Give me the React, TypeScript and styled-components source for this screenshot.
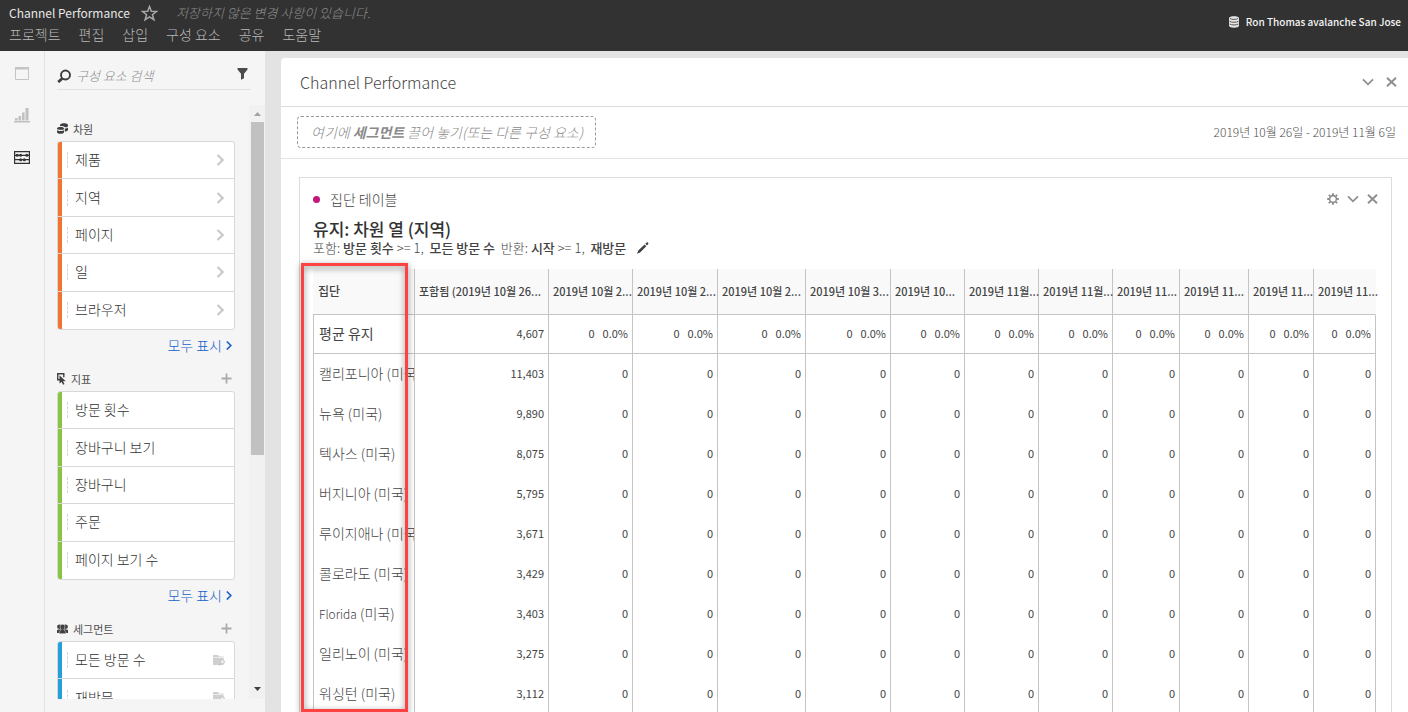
import React from "react";
import styled, { createGlobalStyle } from "styled-components";

const GlobalStyle = createGlobalStyle`
  *, *::before, *::after { box-sizing: border-box; }
  body {
    margin: 0;
    background: #e3e3e3;
    color: #444444;
    font-family: "Noto Sans CJK KR", "Noto Sans", sans-serif;
    font-size: 14px;
    line-height: 20px;
  }
  h1, h2, h3, p, ul { margin: 0; padding: 0; font-weight: 400; }
  ul { list-style: none; }
  button, input { font: inherit; color: inherit; background: none; border: 0; padding: 0; margin: 0; }
  button { cursor: pointer; }
  svg { display: block; }
`;

const Shell = styled.div`
  display: flex;
  flex-direction: column;
  height: 100vh;
  overflow: hidden;
`;

/* ---------- top bar ---------- */
const TopBar = styled.header`
  display: flex;
  justify-content: space-between;
  flex: none;
  height: 51px;
  padding: 3px 7px 0 9px;
  background: #323232;
  color: #b8b8b8;
`;
const TitleRow = styled.div`
  display: flex;
  align-items: center;
  height: 20px;
`;
const ProjectName = styled.h1`
  font-size: 12px;
  line-height: 20px;
  color: #e6e6e6;
`;
const StarButton = styled.button`
  margin: 0 18px 0 11px;
`;
const Unsaved = styled.p`
  font-size: 13px;
  font-style: italic;
  font-weight: 300;
  line-height: 18px;
  color: #8c8c8c;
`;
const MenuBar = styled.nav`
  display: flex;
  gap: 18px;
  margin-top: 1px;
`;
const MenuButton = styled.button`
  font-weight: 300;
  line-height: 20px;
`;
const Org = styled.div`
  display: flex;
  align-items: center;
  gap: 7px;
  height: 38px;
  font-size: 10px;
  font-weight: 500;
  color: #f4f4f4;
`;

/* ---------- shell ---------- */
const Body = styled.div`
  display: flex;
  flex: 1;
  min-height: 0;
`;
const Rail = styled.nav`
  display: flex;
  flex-direction: column;
  align-items: center;
  flex: none;
  width: 45px;
  padding-top: 12px;
  gap: 22px;
  border-right: 1px solid #e1e1e1;
  background: #f5f5f5;
`;
const RailButton = styled.button`
  display: grid;
  place-items: center;
  width: 24px;
  height: 20px;
`;
const SideBar = styled.aside`
  display: flex;
  flex-direction: column;
  flex: none;
  width: 220px;
  padding-bottom: 13px;
  background: #f5f5f5;
`;
const SearchRow = styled.div`
  display: flex;
  align-items: center;
  flex: none;
  height: 27px;
  margin: 12px 14px 15px 12px;
  border-bottom: 1px solid #e1e1e1;
`;
const SearchInput = styled.input`
  flex: 1;
  min-width: 0;
  margin-left: 5px;
  font-size: 13px;
  font-weight: 300;
  outline: 0;
  &::placeholder { color: #8e8e8e; font-style: italic; opacity: 1; }
`;
const FilterButton = styled.button`
  margin: 0 3px 5px 0;
`;
const ScrollArea = styled.div`
  display: flex;
  flex: 1;
  min-height: 0;
`;
const Sections = styled.div`
  flex: 1;
  min-width: 0;
  padding: 13px 14px 0 12px;
  overflow: hidden;
`;
const ScrollTrack = styled.div`
  display: flex;
  flex-direction: column;
  align-items: center;
  justify-content: space-between;
  width: 16px;
  padding: 7px 0 8px;
  background: #f1f1f1;
`;
const ScrollBody = styled.div`
  flex: 1;
  align-self: stretch;
  margin: 6px 1px 0 2px;
`;
const ScrollThumb = styled.div`
  height: 59%;
  background: #c1c1c1;
`;

const Section = styled.section`
  height: 250px;
`;
const SectionHead = styled.div`
  display: flex;
  align-items: center;
  gap: 5px;
  height: 23px;
  padding-bottom: 2px;
`;
const SectionTitle = styled.h2`
  flex: 1;
  font-size: 11px;
  line-height: 16px;
  color: #505050;
`;
const AddButton = styled.button`
  margin-right: 3px;
`;
const List = styled.ul<{ $rows: number }>`
  display: flex;
  flex-direction: column;
  height: ${(p) => (p.$rows === 5 ? "189px" : "auto")};
  border: 1px solid #d8d8d8;
  border-radius: 3px;
  background: #ffffff;
  overflow: hidden;
`;
const Item = styled.li<{ $accent: string }>`
  display: flex;
  align-items: center;
  flex: 1 0 37px;
  min-height: 37px;
  padding-right: 9px;
  color: #323232;
  background: linear-gradient(to right, ${(p) => p.$accent} 4px, transparent 4px);
  &:not(:last-child) { border-bottom: 1px solid #d8d8d8; }
`;
const Grip = styled.span`
  height: 16px;
  margin: 0 7px 0 9px;
  border-left: 1px dashed #d4d4d4;
`;
const ItemName = styled.span`
  flex: 1;
  padding-bottom: 2px;
  font-weight: 300;
  white-space: nowrap;
`;
const ShowAll = styled.a`
  display: flex;
  align-items: center;
  justify-content: flex-end;
  gap: 4px;
  margin: 5px 3px 0 0;
  font-size: 14px;
  font-weight: 300;
  color: #2062c8;
  text-decoration: none;
`;

/* ---------- workspace ---------- */
const Main = styled.main`
  position: relative;
  display: flex;
  flex: 1;
  min-width: 0;
  padding: 7px 0 0 16px;
  overflow: hidden;
`;
const Panel = styled.section`
  flex: 1;
  min-width: 0;
  border-top-left-radius: 4px;
  background: #ffffff;
`;
const PanelHead = styled.div`
  display: flex;
  align-items: center;
  justify-content: space-between;
  height: 49px;
  padding: 0 11px 0 19px;
  border-bottom: 1px solid #dcdcdc;
`;
const PanelTitle = styled.h2`
  font-size: 16px;
  font-weight: 300;
  line-height: 24px;
`;
const Tools = styled.div<{ $gap: number }>`
  display: flex;
  align-items: center;
  gap: ${(p) => p.$gap}px;
`;
const FilterRow = styled.div`
  display: flex;
  align-items: center;
  justify-content: space-between;
  height: 52px;
  padding: 0 12px 2px 16px;
  border-bottom: 1px solid #e4e4e4;
`;
const DropZone = styled.div`
  width: 299px;
  height: 32px;
  padding: 0 13px;
  border: 1px dashed #999999;
  border-radius: 4px;
  font-size: 14px;
  font-style: italic;
  font-weight: 300;
  line-height: 30px;
  color: #8a8a8a;
  white-space: nowrap;
  b { font-weight: 700; }
`;
const DateRange = styled.button`
  font-size: 12px;
  font-weight: 300;
  color: #505050;
`;
const Card = styled.section`
  margin: 18px 16px 0 18px;
  padding: 10px 15px 0 13px;
  border: 1px solid #dcdcdc;
  border-bottom: 0;
`;
const CardHead = styled.div`
  display: flex;
  align-items: center;
  height: 22px;
  margin-right: -2px;
`;
const Dot = styled.span`
  width: 7px;
  height: 7px;
  margin-right: 10px;
  border-radius: 50%;
  background: #c4177c;
`;
const CardTitle = styled.h3`
  flex: 1;
  font-size: 14px;
  font-weight: 300;
`;
const CohortTitle = styled.p`
  margin-top: 8px;
  font-size: 17px;
  font-weight: 500;
  line-height: 22px;
  color: #323232;
`;
const CohortRule = styled.div`
  display: flex;
  align-items: center;
  gap: 11px;
  height: 16px;
  margin-bottom: 13px;
  font-size: 13px;
  line-height: 16px;
  font-weight: 300;
  white-space: pre;
  b { font-weight: 500; }
`;

const Table = styled.table`
  width: 100%;
  table-layout: fixed;
  border-collapse: separate;
  border-spacing: 0;
`;
const HeadCell = styled.th<{ $name?: boolean }>`
  height: 46px;
  padding: 0 0 1px ${(p) => (p.$name ? 5 : 4)}px;
  border-right: 1px solid #c4c4c4;
  border-bottom: 1px solid #c4c4c4;
  background: #f9f9f9;
  font-size: ${(p) => (p.$name ? 12 : 11)}px;
  font-weight: 500;
  text-align: left;
  white-space: nowrap;
  &:last-child { border-right-color: #f9f9f9; }
`;
const RowName = styled.th<{ $total?: boolean }>`
  height: ${(p) => (p.$total ? 39 : 40)}px;
  padding: 0 0 2px 5px;
  border: 0 solid #c4c4c4;
  border-width: 0 1px ${(p) => (p.$total ? 1 : 0)}px 1px;
  font-size: 14px;
  font-weight: ${(p) => (p.$total ? 400 : 300)};
  text-align: left;
  white-space: nowrap;
  overflow: hidden;
`;
const Latin = styled.span`
  font-size: 12px;
`;
const Cell = styled.td<{ $total?: boolean }>`
  padding: 0 4px 2px 0;
  border: 0 solid #c4c4c4;
  border-width: 0 1px ${(p) => (p.$total ? 1 : 0)}px 0;
  font-size: 11px;
  text-align: right;
  white-space: nowrap;
`;
const Percent = styled.span`
  margin-left: 8px;
`;
const Highlight = styled.div`
  position: absolute;
  top: 212px;
  bottom: 0;
  left: 36px;
  width: 107px;
  border: 3px solid #fc4242;
  filter: drop-shadow(0 2px 3px rgba(0, 0, 0, 0.5));
  pointer-events: none;
`;

/* ---------- icons ---------- */
const ChevronDown = () => (
  <svg width="12" height="8" viewBox="0 0 12 8" fill="none" stroke="#8e8e8e" strokeWidth="1.7">
    <path d="M1 1.3 6 6.3l5-5" />
  </svg>
);
const Close = () => (
  <svg width="11" height="10" viewBox="0 0 11 10" fill="none" stroke="#8e8e8e" strokeWidth="1.9">
    <path d="m1 .7 9 8.6M10 .7 1 9.3" />
  </svg>
);
const ChevronRight = () => (
  <svg width="9" height="12" viewBox="0 0 9 12" fill="none" stroke="#c9c9c9" strokeWidth="2.2">
    <path d="m1.5 1 5.2 5-5.2 5" />
  </svg>
);
const SmallChevron = () => (
  <svg width="6" height="10" viewBox="0 0 6 10" fill="none" stroke="#2062c8" strokeWidth="1.7">
    <path d="m.8 1.500 4 4-4 4" />
  </svg>
);
const Star = () => (
  <svg width="17" height="17" viewBox="0 0 17 17" fill="none" stroke="#a8a8a8" strokeWidth="1.5">
    <path d="m8.500 1.500 1.800 4.800 5.200.2-4.100 3.200 1.500 5-4.400-2.900-4.400 2.900 1.500-5L1.500 6.500l5.200-.2z" />
  </svg>
);
const Database = () => (
  <svg width="10" height="12" viewBox="0 0 10 12">
    <path fill="#e6e6e6" d="M0 2.200C0-.3 10-.3 10 2.200v7.600c0 2.500-10 2.500-10 0z" />
    <path fill="none" stroke="#555555" strokeWidth="1" d="M1 2.500c1.500 1.200 6.500 1.200 8 0M.5 5.300c2 1.300 7 1.300 9 0M.5 8c2 1.300 7 1.300 9 0" />
  </svg>
);
const Gear = () => (
  <svg width="12" height="12" viewBox="0 0 12 12" fill="none" stroke="#8e8e8e">
    <circle cx="6" cy="6" r="3.400" strokeWidth="1.600" />
    <path strokeWidth="1.900" d="M6 .2v2M6 9.800v2M.2 6h2M9.800 6h2M1.800 1.800l1.400 1.400M8.800 8.800l1.400 1.400M10.200 1.800 8.800 3.200M3.200 8.800l-1.400 1.400" />
  </svg>
);
const Search = () => (
  <svg width="14" height="14" viewBox="0 0 14 14" fill="none" stroke="#3c3c3c">
    <circle cx="8.500" cy="6" r="4.500" strokeWidth="1.900" />
    <path strokeWidth="2.700" d="M5.200 9.500 1.200 13.100" />
  </svg>
);
const Funnel = () => (
  <svg width="11" height="12" viewBox="0 0 11 12" fill="#4b4b4b">
    <path d="M.5 0h10v1.600L7 5.800v4.400L4 11.800v-6L.5 1.600z" />
  </svg>
);
const PanelIcon = () => (
  <svg width="14" height="13" viewBox="0 0 14 13">
    <path fill="none" stroke="#c4c4c4" d="M.5.5h13v12H.5z" />
    <path fill="#c4c4c4" d="M0 0h14v2.500H0z" />
  </svg>
);
const BarsIcon = () => (
  <svg width="16" height="15" viewBox="0 0 16 15" fill="#c0c0c0">
    <path d="M1 10h2.600v2.500H1zM4.500 8h2.600v4.500H4.500zM8 4.500h2.600v8H8zM11.500 0H14.500v12.500h-3zM0 13h16v1.500H0z" />
  </svg>
);
const AbacusIcon = () => (
  <svg width="16" height="13" viewBox="0 0 16 13">
    <path fill="none" stroke="#323232" strokeWidth="1.200" d="M.6.600h14.800v11.800H.6zM1 4.300h14M1 8.700h14" />
    <g fill="#323232">
      <circle cx="3.200" cy="4.300" r="1.500" />
      <circle cx="6.600" cy="4.300" r="1.500" />
      <circle cx="12.800" cy="4.300" r="1.500" />
      <circle cx="6.700" cy="8.700" r="1.500" />
      <circle cx="10.300" cy="8.700" r="1.500" />
    </g>
  </svg>
);
const DimensionIcon = () => (
  <svg width="11" height="11" viewBox="0 0 11 11" fill="#404040">
    <path d="M3 1.800C3.600-.4 10.400-.4 11 1.800v1C10.400 4.700 8.800 4.500 7.800 4 6.600 3.100 4.600 2.900 3 3.200zM0 5.200c.6-1.700 6.400-1.700 7 0v.9C6 7.300 1 7.300 0 6.100zM0 7.300c1.500 1 5.500 1 7 0v2c-.6 2-6.400 2-7 0zM7.800 5.400c1.300 0 2.500-.4 3.200-1v2.900c-.8.800-2 1.200-3.200 1.200z" />
  </svg>
);
const MetricIcon = () => (
  <svg width="9" height="12" viewBox="0 0 9 12">
    <path fill="none" stroke="#404040" strokeWidth="1.400" d="M3 6.800H.7V.7h6.100v3.500" />
    <path fill="#404040" d="m2.500 2.300 6.200 5.900H6l1.500 2.800-1.400.8-1.500-2.900-2.100 1.700z" />
  </svg>
);
const SegmentIcon = () => (
  <svg width="11" height="10" viewBox="0 0 11 10" fill="#404040">
    <circle cx="2.400" cy="2.800" r="2.300" />
    <circle cx="8.600" cy="2.800" r="2.300" />
    <path d="M0 6c1-1 10-1 11 0v3H0z" />
    <path stroke="#f5f5f5" strokeWidth=".5" d="M5.500.3c3.400 0 2.400 4 1.300 5.200 0 1 2 1 2.200 4.200H2c.2-3.200 2.200-3.200 2.200-4.200C3.100 4.300 2.100.3 5.500.3z" />
  </svg>
);
const FolderIcon = () => (
  <svg width="12" height="11" viewBox="0 0 12 11">
    <path fill="#cfcfcf" d="M0 0h5l1 1.500h4.500V10H0z" />
    <path stroke="#f5f5f5" strokeWidth=".8" d="M0 2.500h10" />
    <circle cx="9.300" cy="6.800" r="2.100" fill="#eeeeee" stroke="#c4c4c4" />
    <path stroke="#c4c4c4" strokeWidth="1.300" d="M7.800 8.400 6 10.500" />
  </svg>
);
const Plus = () => (
  <svg width="11" height="11" viewBox="0 0 11 11" stroke="#ababab" strokeWidth="1.800">
    <path d="M5.500.5v10M.5 5.500h10" />
  </svg>
);
const Pencil = () => (
  <svg width="12" height="12" viewBox="0 0 12 12" fill="#404040">
    <path d="M0 11.800 1.300 8.600 7.600 2.500l1.700 1.700-6.200 6.200zM8.300 1.800 9.700.5c.7-.6 2.200.8 1.600 1.500L10 3.500z" />
  </svg>
);
const Triangle = ({ up }: { up?: boolean }) => (
  <svg width="7" height="4" viewBox="0 0 7 4" fill={up ? "#a3a3a3" : "#404040"}>
    <path d={up ? "M0 4 3.500 0 7 4z" : "M0 0h7L3.500 4z"} />
  </svg>
);

/* ---------- data ---------- */
const groups = [
  { title: "차원", icon: <DimensionIcon />, accent: "#f27430", end: <ChevronRight />, add: false,
    items: ["제품", "지역", "페이지", "일", "브라우저"] },
  { title: "지표", icon: <MetricIcon />, accent: "#87c540", end: null, add: true,
    items: ["방문 횟수", "장바구니 보기", "장바구니", "주문", "페이지 보기 수"] },
  { title: "세그먼트", icon: <SegmentIcon />, accent: "#24a0d8", end: <FolderIcon />, add: true,
    items: ["모든 방문 수", "재방문"] },
];

const columns = [
  { label: "집단", width: 102 },
  { label: "포함됨 (2019년 10월 26...", width: 134 },
  { label: "2019년 10월 2...", width: 84 },
  { label: "2019년 10월 2...", width: 85 },
  { label: "2019년 10월 2...", width: 88 },
  { label: "2019년 10월 3...", width: 85 },
  { label: "2019년 10...", width: 74 },
  { label: "2019년 11월...", width: 74 },
  { label: "2019년 11월...", width: 74 },
  { label: "2019년 11...", width: 67 },
  { label: "2019년 11...", width: 69 },
  { label: "2019년 11...", width: 65 },
  { label: "2019년 11...", width: 62 },
];
const periods = columns.slice(2);

const rows: { id: string; name: React.ReactNode; total: string }[] = [
  { id: "ca", name: "캘리포니아 (미국)", total: "11,403" },
  { id: "ny", name: "뉴욕 (미국)", total: "9,890" },
  { id: "tx", name: "텍사스 (미국)", total: "8,075" },
  { id: "va", name: "버지니아 (미국)", total: "5,795" },
  { id: "la", name: "루이지애나 (미국)", total: "3,671" },
  { id: "co", name: "콜로라도 (미국)", total: "3,429" },
  { id: "fl", name: <><Latin>Florida</Latin> (미국)</>, total: "3,403" },
  { id: "il", name: "일리노이 (미국)", total: "3,275" },
  { id: "wa", name: "워싱턴 (미국)", total: "3,112" },
];

export default function App() {
  return (
    <Shell>
      <GlobalStyle />
      <TopBar>
        <div>
          <TitleRow>
            <ProjectName>Channel Performance</ProjectName>
            <StarButton aria-label="즐겨찾기"><Star /></StarButton>
            <Unsaved>저장하지 않은 변경 사항이 있습니다.</Unsaved>
          </TitleRow>
          <MenuBar>
            {["프로젝트", "편집", "삽입", "구성 요소", "공유", "도움말"].map((m) => (
              <MenuButton key={m}>{m}</MenuButton>
            ))}
          </MenuBar>
        </div>
        <Org><Database />Ron Thomas avalanche San Jose</Org>
      </TopBar>

      <Body>
        <Rail>
          <RailButton aria-label="패널"><PanelIcon /></RailButton>
          <RailButton aria-label="시각화"><BarsIcon /></RailButton>
          <RailButton aria-label="구성 요소"><AbacusIcon /></RailButton>
        </Rail>

        <SideBar>
          <SearchRow>
            <Search />
            <SearchInput type="text" aria-label="구성 요소 검색" placeholder="구성 요소 검색" />
            <FilterButton aria-label="필터"><Funnel /></FilterButton>
          </SearchRow>
          <ScrollArea>
            <Sections>
              {groups.map((g) => (
                <Section key={g.title}>
                  <SectionHead>
                    {g.icon}
                    <SectionTitle>{g.title}</SectionTitle>
                    {g.add && <AddButton aria-label={`${g.title} 추가`}><Plus /></AddButton>}
                  </SectionHead>
                  <List $rows={g.items.length}>
                    {g.items.map((name) => (
                      <Item key={name} $accent={g.accent}>
                        <Grip />
                        <ItemName>{name}</ItemName>
                        {g.end}
                      </Item>
                    ))}
                  </List>
                  {g.items.length === 5 && <ShowAll href="#all">모두 표시<SmallChevron /></ShowAll>}
                </Section>
              ))}
            </Sections>
            <ScrollTrack>
              <Triangle up />
              <ScrollBody><ScrollThumb /></ScrollBody>
              <Triangle />
            </ScrollTrack>
          </ScrollArea>
        </SideBar>

        <Main>
          <Panel>
            <PanelHead>
              <PanelTitle>Channel Performance</PanelTitle>
              <Tools $gap={12}>
                <button aria-label="패널 축소"><ChevronDown /></button>
                <button aria-label="패널 닫기"><Close /></button>
              </Tools>
            </PanelHead>
            <FilterRow>
              <DropZone>여기에 <b>세그먼트</b> 끌어 놓기(또는 다른 구성 요소)</DropZone>
              <DateRange>2019년 10월 26일 - 2019년 11월 6일</DateRange>
            </FilterRow>
            <Card>
              <CardHead>
                <Dot />
                <CardTitle>집단 테이블</CardTitle>
                <Tools $gap={8}>
                  <button aria-label="설정"><Gear /></button>
                  <button aria-label="축소"><ChevronDown /></button>
                  <button aria-label="닫기"><Close /></button>
                </Tools>
              </CardHead>
              <CohortTitle>유지: 차원 열 (지역)</CohortTitle>
              <CohortRule>
                <span>포함: <b>방문 횟수</b> &gt;= 1,  <b>모든 방문 수</b>  반환: <b>시작</b> &gt;= 1,  <b>재방문</b></span>
                <button aria-label="편집"><Pencil /></button>
              </CohortRule>
              <Table>
                <colgroup>
                  {columns.map((c, i) => <col key={i} style={{ width: c.width }} />)}
                </colgroup>
                <thead>
                  <tr>
                    {columns.map((c, i) => (
                      <HeadCell key={i} scope="col" $name={i === 0}>{c.label}</HeadCell>
                    ))}
                  </tr>
                </thead>
                <tbody>
                  <tr>
                    <RowName scope="row" $total>평균 유지</RowName>
                    <Cell $total>4,607</Cell>
                    {periods.map((_, i) => <Cell key={i} $total>0<Percent>0.0%</Percent></Cell>)}
                  </tr>
                  {rows.map((r) => (
                    <tr key={r.id}>
                      <RowName scope="row">{r.name}</RowName>
                      <Cell>{r.total}</Cell>
                      {periods.map((_, i) => <Cell key={i}>0</Cell>)}
                    </tr>
                  ))}
                </tbody>
              </Table>
            </Card>
          </Panel>
          <Highlight />
        </Main>
      </Body>
    </Shell>
  );
}
